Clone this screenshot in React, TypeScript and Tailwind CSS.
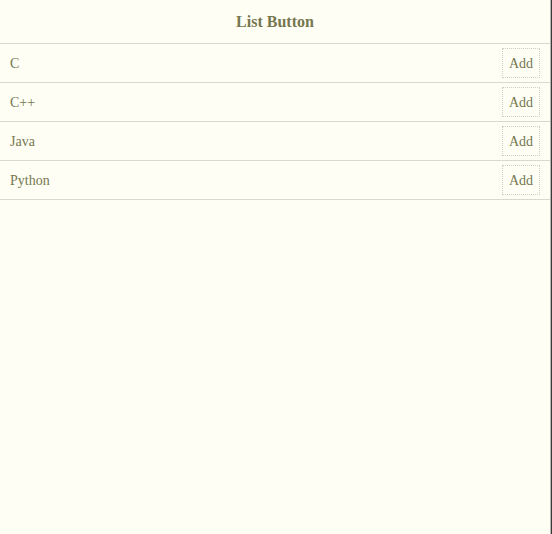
import React from "react";

const items = ["C", "C++", "Java", "Python"];

const App: React.FC = () => {
  return (
    <div className="w-[552px] h-[534px] flex bg-[#fefef5] font-['Liberation_Serif',serif] text-[#76764f]">
      <div className="flex-1">
        <div className="h-[44px] flex items-center justify-center border-b border-[#d9d9cc]">
          <h1 className="text-[16px] font-bold">List Button</h1>
        </div>
        <ul>
          {items.map((item) => (
            <li
              key={item}
              className="h-[39px] flex items-center justify-between pl-[10px] pr-[10px] border-b border-[#d9d9cc] text-[14px]"
            >
              <span>{item}</span>
              <button
                type="button"
                className="h-[30px] w-[38px] border border-dotted border-[#cfcfc4] text-[14px] bg-transparent"
              >
                Add
              </button>
            </li>
          ))}
        </ul>
      </div>
      <div className="w-px bg-[#b8b8b0]" />
      <div className="w-px bg-[#3a3a3a]" />
    </div>
  );
};

export default App;
